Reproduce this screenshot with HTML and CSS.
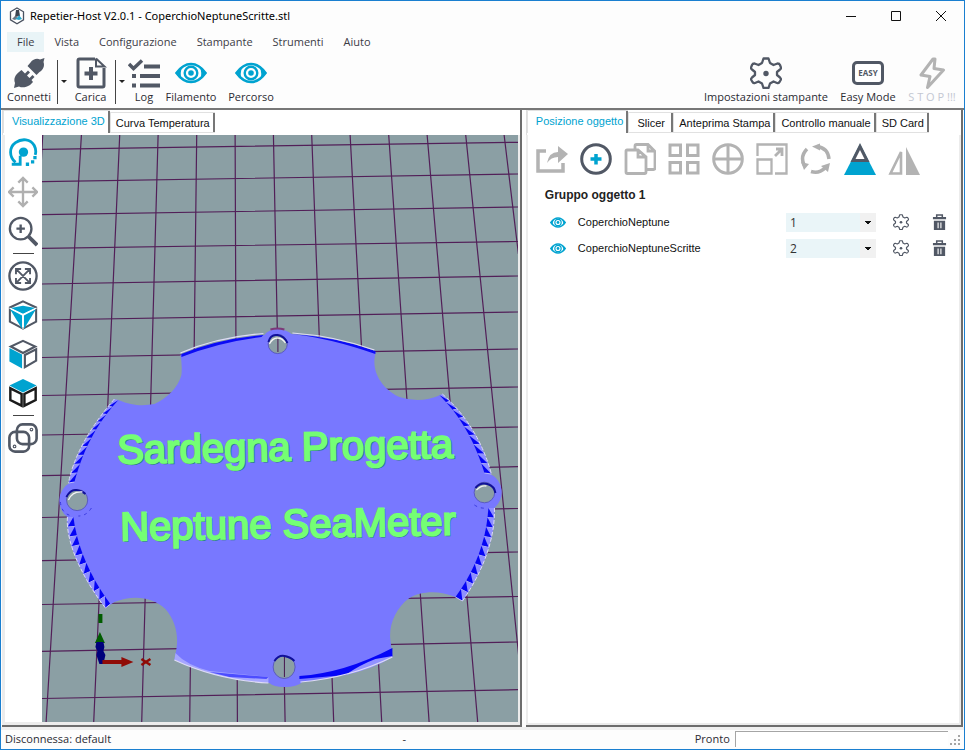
FILE: index.html
```html
<!DOCTYPE html>
<html lang="it">
<head>
<meta charset="utf-8">
<title>Repetier-Host V2.0.1 - CoperchioNeptuneScritte.stl</title>
<link rel="stylesheet" href="styles.css">
</head>
<body>
<svg class="defs" aria-hidden="true">
  <symbol id="eye" viewBox="0 0 32 22">
    <path d="M1.500 11Q8 2 16 2T30.500 11Q24 20 16 20T1.500 11Z" fill="none" stroke="currentColor" stroke-width="2.600"/>
    <circle cx="16" cy="11" r="6.300" fill="none" stroke="currentColor" stroke-width="2.400"/>
    <circle cx="16" cy="11" r="2.800" fill="currentColor"/>
    <path d="M6 5Q2 9 1 11Q3 15 7 18Q4 11 8 4ZM26 5Q30 9 31 11Q29 15 25 18Q28 11 24 4Z" fill="currentColor"/>
  </symbol>
  <symbol id="gear" viewBox="0 0 32 32">
    <path d="M13.500 1.500h5l1.500 4.500 3.500 2 4-1.500q2 0 2.500 1.500l1 2.500q0 1.500-1 2L27 15v3l3 2.500q1 1 1 2L29.500 25q-1 1.500-2.500 1l-3.500-1.500-3.500 2-1.500 4.500h-5L12 26.500l-3.500-2L5 26q-1.500.500-2.500-1L1 22.500q0-1 1-2L5 18v-3l-3-2.500q-1-.500-1-2L2 8q.500-1.500 2.500-1.500l4 1.500 3.500-2Z" fill="none" stroke="currentColor" stroke-width="2.300" stroke-linejoin="round"/>
    <circle cx="16" cy="16.500" r="2.700" fill="currentColor"/>
  </symbol>
  <symbol id="trash" viewBox="0 0 16 18">
    <path d="M5 3V1h6v2" fill="none" stroke="currentColor" stroke-width="1.600"/>
    <path d="M1 3h14v2.500H1ZM2 7h12v10H2Z" fill="currentColor"/>
    <path d="M6.500 9v6M9.500 9v6" stroke="#fff" stroke-width="1.200"/>
  </symbol>
</svg>

<div class="window">
  <header class="titlebar">
    <svg class="logo" viewBox="0 0 16 18"><path d="M8 1l6.500 3.800v8L8 16.700 1.500 12.800v-8Z" fill="#fff" stroke="#4a5260" stroke-width="1.300"/><path d="M7 3l3 0 1 6-5 1Z" fill="#3c4450"/><path d="M6 9L3 12l3 1 3-2Z" fill="#6b7480"/><path d="M10 8l3 4-3 1-4-1 3-2Z" fill="#28a6cc"/></svg>
    <h1 class="title">Repetier-Host V2.0.1 - CoperchioNeptuneScritte.stl</h1>
    <div class="caption">
      <button aria-label="Riduci"><svg viewBox="0 0 12 12"><path d="M1 6.500h10"/></svg></button>
      <button aria-label="Ingrandisci"><svg viewBox="0 0 12 12"><path d="M1.500 1.500h9v9h-9Z"/></svg></button>
      <button aria-label="Chiudi"><svg viewBox="0 0 12 12"><path d="M1 1l10 10M11 1L1 11"/></svg></button>
    </div>
  </header>

  <nav class="menu">
    <button class="open">File</button><button>Vista</button><button>Configurazione</button><button>Stampante</button><button>Strumenti</button><button>Aiuto</button>
  </nav>

  <div class="toolbar">
    <button class="tool connect">
      <svg viewBox="0 0 32 32" fill="#515865"><path d="M31.500 1l-1 4c1.500 4-.5 8-4 10l-3 3-9-9 3-3.500C20 2 24 1 27 2.500ZM1 31l1-5C.5 22 2 18 6 15l2.500-2L12 16.500l3-3 2 2-3 3 2.500 2.500 3-3 2 2-3 3L20 25l-3 3c-4 2.500-8 3-11 1.500Z"/></svg>
      <span>Connetti</span></button>
    <i class="rule"></i>
    <button class="drop" aria-label="Altre connessioni"></button>
    <button class="tool load">
      <svg viewBox="0 0 32 32" fill="none" stroke="#515865" stroke-width="3"><path d="M20 2H4.500Q3 2 3 3.500v25Q3 30 4.500 30h23q1.500 0 1.500-1.500V11"/><path d="M21 1.500v8h8.500L21 1.500" stroke-width="2"/><path d="M16 10v13M9.500 16.500h13" stroke-width="4"/></svg>
      <span>Carica</span></button>
    <i class="rule"></i>
    <button class="drop" aria-label="File recenti"></button>
    <button class="tool log">
      <svg viewBox="0 0 32 32" fill="none" stroke="#515865" stroke-width="4"><path d="M1 7l4.500 4.500L14 3.500" stroke-width="3.500"/><path d="M16 9.500h16M12 19h20M12 28.500h20"/><path d="M4 19h4M4 28.500h4"/></svg>
      <span>Log</span></button>
    <button class="tool wide"><svg class="blue" viewBox="0 0 32 32"><use href="#eye" y="5" width="32" height="22"/></svg><span>Filamento</span></button>
    <button class="tool wide"><svg class="blue" viewBox="0 0 32 32"><use href="#eye" y="5" width="32" height="22"/></svg><span>Percorso</span></button>
    <div class="spring"></div>
    <button class="tool printer"><svg class="slate" viewBox="0 0 32 32"><use href="#gear" width="32" height="32"/></svg><span>Impostazioni stampante</span></button>
    <button class="tool easy">
      <svg viewBox="0 0 32 32"><rect x="1.500" y="5.500" width="29" height="21" rx="3.500" fill="#fff" stroke="#515865" stroke-width="3"/><text x="16" y="19" class="easytext">EASY</text></svg>
      <span>Easy Mode</span></button>
    <button class="tool wide stop">
      <svg viewBox="0 0 32 32" fill="none" stroke="#b3b3b3" stroke-width="3" stroke-linejoin="round"><path d="M17 2L5 18l9 1.500L11.500 30.500 27.500 13l-9.500-1.500L19 2Z"/></svg>
      <span>S T O P !!!</span></button>
  </div>

  <main class="work">
    <section class="left">
      <div class="tabs"><button class="tab active">Visualizzazione 3D</button><button class="tab">Curva Temperatura</button></div>
      <div class="view">
        <div class="side">
          <button aria-label="Ruota"><svg viewBox="0 0 32 32"><circle cx="16.500" cy="15" r="5" fill="#00a3d0"/><path d="M8 26C1 20 1 10 8 5S24 1 28 8c2 4 2 7 1 10" fill="none" stroke="#00a3d0" stroke-width="3"/><path d="M4 28h9V19" fill="none" stroke="#00a3d0" stroke-width="3"/><path d="M19 28h3.500M24.500 25.500h3.500M27 21h3.500" stroke="#00a3d0" stroke-width="3.500"/></svg></button>
          <button aria-label="Sposta"><svg viewBox="0 0 32 32" fill="none" stroke="#b0b0b0" stroke-width="2.500"><path d="M16 1v30M1 16h30M11 6l5-5 5 5M11 26l5 5 5-5M6 11l-5 5 5 5M26 11l5 5-5 5"/></svg></button>
          <button aria-label="Zoom"><svg viewBox="0 0 32 32" fill="none" stroke="#515865" stroke-width="2.500"><circle cx="13.500" cy="13.500" r="11.500"/><path d="M13.500 9v9M9 13.500h9"/><path d="M22 22l9 9" stroke-width="4"/></svg></button>
          <hr>
          <button aria-label="Adatta"><svg viewBox="0 0 32 32" fill="none" stroke="#515865" stroke-width="2"><circle cx="16" cy="16" r="14.500" stroke-width="2.500"/><path d="M9 9l14 14M23 9L9 23M8.500 14V8.500H14M18 8.500h5.500V14M23.500 18v5.500H18M14 23.500H8.500V18"/></svg></button>
          <button aria-label="Vista isometrica"><svg viewBox="0 0 32 32"><path d="M16 1.500L30 8v15L16 30.500 2 23V8Z" fill="none" stroke="#515865" stroke-width="2.200"/><path d="M3 8.500L16 6l13 2.500-13 6.500ZM2 9.500L15 16.500V31ZM30 9.500L17 16.500V31Z" fill="#00a3d0"/><path d="M1.500 8.500L16 15.500l14.500-7M16 15.500V31" fill="none" stroke="#fff" stroke-width="1.200"/></svg></button>
          <button aria-label="Vista frontale"><svg viewBox="0 0 32 32" fill="none" stroke="#515865" stroke-width="2.300"><path d="M16 2l13 6-13 7L3 8ZM30 11v12l-12 7V17Z"/><path d="M1.500 9.500L15 16.500v15L1.500 24Z" fill="#00a3d0" stroke="none"/></svg></button>
          <button aria-label="Vista dall'alto"><svg viewBox="0 0 32 32" fill="none" stroke="#1b1b1b" stroke-width="2.600"><path d="M2.500 11v12.500l12 6V17ZM29.500 11v12.500l-12 6V17Z"/><path d="M16 1l14.500 7L16 15.500 1.500 8Z" fill="#00a3d0" stroke="none"/></svg></button>
          <hr>
          <button aria-label="Proiezione"><svg viewBox="0 0 32 32" fill="none" stroke="#515865" stroke-width="2.800"><rect x="9.500" y="1.500" width="21" height="21" rx="6"/><rect x="1.500" y="9.500" width="21" height="21" rx="6"/><circle cx="25" cy="7" r=".6"/><circle cx="7" cy="25" r=".6"/></svg></button>
        </div>
        <svg class="scene" viewBox="42 135 477 587" preserveAspectRatio="xMidYMid slice" role="img" aria-label="Anteprima 3D del coperchio">
          <g class="grid">
            <path d="M42 149.300L519 142.300M42 181.700L519 174M42 214.700L519 207M42 248.300L519 241.500M42 284L519 276M42 320L519 312M42 357.500L519 349M42 395.500L519 387M42 435L519 427M42 475.700L519 466.700M42 517.500L519 508.500M42 560.700L519 552M42 604.500L519 596.500M42 651.300L519 642M42 698.500L519 689.700"/>
            <path d="M43.300 135L42 160M82 135L46.700 722M120.300 135L94.300 722M158.700 135L142.300 722M197.300 135L190.300 722M235.700 135L238 722M274 135L285.700 722M312.300 135L334.300 722M350.700 135L382.300 722M389.300 135L429.700 722M427.700 135L478.300 722M466.300 135L526 722M504.700 135L519 254"/>
          </g>
          <path fill="#7878ff" d="M181 355Q221 338 265 335Q268 330 278 329Q288 330 292 334Q335 336 376 352L375 360C374 378 388 392 400 397Q421 404 441 395Q477 426 491 474A20.500 20.500 0 0 1 495 508C496 540 482 574 463 601L456 597C440 590 421 591 410 598C396 608 389 626 391 640L393 657Q350 677 303 682Q298 687 285 687Q274 687 270 683Q220 680 175 660L176 654C180 638 177 622 166 609C152 596 133 595 115 602L106 608C86 582 66 545 68 517A20.500 20.500 0 0 1 70 483Q77 444 115 400L119 400C133 406 144 406 155 404C167 399 179 387 182 375Q183 364 181 355Z"/>
          <g id="teeth"></g>
          <path d="M182 354Q218 339 264 335L262 337Q220 342 182 357ZM293 334Q336 337 376 351V354Q330 338 293 334Z" fill="#0b0bf5"/>
          <path d="M181 353Q218 337 264 333.500M293 333Q336 336 375 350" fill="none" stroke="#dedcf5" stroke-width="1.200"/>
          <path d="M393 648L393 657Q374 667 346 675L300 679V676Q345 673 393 648Z" fill="#0505f8"/>
          <path d="M393 656L376 659Q360 665 346 675Q374 669 393 657Z" fill="#9292ff"/>
          <path d="M176 653Q187 665 210 671L269 677V683Q218 680 175 660Z" fill="#a6a6ff"/>
          <path d="M210 672L269 677 267 679 230 677Z" fill="#4c4cff"/>
          <path d="M175 660Q218 680 269 683M301 682Q350 678 393 657" fill="none" stroke="#dedcf5" stroke-width="1.200"/>
          <path d="M271 329.500q7-2 14 0" fill="none" stroke="#7c3979" stroke-width="2"/>
          <g class="hole"><circle cx="278.300" cy="344" r="9.600"/><circle cx="77.700" cy="500" r="10.600"/><circle cx="485" cy="492.500" r="10.300"/><ellipse cx="284.700" cy="667" rx="11" ry="11.500"/></g>
          <path d="M278.500 337v15M285 657v20" stroke="#46154d" stroke-width="1"/>
          <path d="M269 342q2-8 9-7t10 8M67 497q4-8 10-7t9 4M476 488q5-6 12-4t8 9M275 661q4-6 10-5t10 5" fill="none" stroke="#10109a" stroke-width="2"/>
          <path d="M270 344q3-6 8-6t8 5M69 500q4-9 14-8M477 490q5-5 10-4" fill="none" stroke="#f2f2f2" stroke-width="1.300"/>
          <path d="M61 502q1 12 12 14M92 508q-5 8-13 8M475 505q6 4 13 3" fill="none" stroke="#3a3ae0" stroke-width="1" stroke-dasharray="3 4"/>
          <g class="model-text shade"><text transform="translate(119.500 464.500) rotate(-1)">Sardegna Progetta</text><text transform="translate(122 541.500) rotate(-1)">Neptune SeaMeter</text></g>
          <g class="model-text"><text transform="translate(118 463.500) rotate(-1)">Sardegna Progetta</text><text transform="translate(121 540.500) rotate(-1)">Neptune SeaMeter</text></g>
          <path d="M99 614h4v9h-4ZM95.500 643l5-11 5 11Z" fill="#005c00"/>
          <path d="M97 642h7l1 5-1 4 2 4-2 9h-4l-3-9 1-4-2-4Z" fill="#00007c"/>
          <path d="M103 660h19v-3l12 5-12 5v-3h-19Z" fill="#900b06"/>
          <path d="M142 659l9 6M151 659l-9 6" stroke="#900b06" stroke-width="2.500"/>
        </svg>
      </div>
    </section>

    <section class="right">
      <div class="tabs"><button class="tab active">Posizione oggetto</button><button class="tab">Slicer</button><button class="tab">Anteprima Stampa</button><button class="tab">Controllo manuale</button><button class="tab">SD Card</button></div>
      <div class="objects">
        <div class="actions">
          <button aria-label="Esporta"><svg viewBox="0 0 32 32"><path d="M10 8H2v20h25v-8" fill="none" stroke="#b3b3b3" stroke-width="3.500"/><path d="M11 20Q13 9 22 9V3l10 8-10 9v-6Q15 14 11 20Z" fill="#b3b3b3"/></svg></button>
          <button aria-label="Aggiungi"><svg viewBox="0 0 32 32" fill="none"><circle cx="16" cy="16" r="14.300" stroke="#515865" stroke-width="3"/><path d="M16 11v10.500M10.500 16h11" stroke="#00a3d0" stroke-width="3.500"/></svg></button>
          <button aria-label="Copia"><svg viewBox="0 0 32 32" fill="none" stroke="#b3b3b3" stroke-width="2.800"><path d="M14 7H3Q2 7 2 8v21q0 1.500 1.500 1.500h17q1.500 0 1.500-1.500V14ZM14 7v7h7M11 7V3q0-1.500 1.500-1.500H24l7 7V25q0 1.500-1.500 1.500H23M24 2v6h6"/></svg></button>
          <button aria-label="Disponi"><svg viewBox="0 0 32 32" fill="none" stroke="#b3b3b3" stroke-width="3"><path d="M2 2h10.500v10.500H2ZM19.500 2H30v10.500H19.500ZM2 19.500h10.500V30H2ZM19.500 19.500H30V30H19.500Z"/></svg></button>
          <button aria-label="Centra"><svg viewBox="0 0 32 32" fill="none" stroke="#b3b3b3" stroke-width="3"><circle cx="16" cy="16" r="14.300"/><path d="M16 2v28M2 16h28"/></svg></button>
          <button aria-label="Scala"><svg viewBox="0 0 32 32" fill="none" stroke="#b3b3b3" stroke-width="2.300"><path d="M1.500 13V1.500h29v29H19M1.500 16.500h14v14h-14Z"/><path d="M19 13l6-6M20 6h6v7" stroke-width="2.800"/></svg></button>
          <button aria-label="Ruota oggetto"><svg viewBox="0 0 32 32" fill="none" stroke="#b0b0b0" stroke-width="3.500"><path d="M17 3.500Q28 5 29 16M25 25q-6 6-14 3.500M4 22Q0 13 7 6"/><path d="M12 3.500l8-3v7ZM30 20l-9 3 7 6ZM1 19l8 2-5 6Z" fill="#b0b0b0" stroke="none"/></svg></button>
          <button aria-label="Taglia"><svg viewBox="0 0 32 32"><path d="M16 1l16 31H0Z" fill="#00a3d0"/><path d="M16 0l9.500 19h-19Z" fill="#515865"/><path d="M16 7l4.500 9h-9Z" fill="#fff"/></svg></button>
          <button aria-label="Specchia"><svg viewBox="0 0 32 32"><path d="M18 4l14 28H18Z" fill="#b3b3b3"/><path d="M13 9v21.500H2.500Z" fill="none" stroke="#b3b3b3" stroke-width="2.600"/></svg></button>
        </div>
        <h2 class="group">Gruppo oggetto 1</h2>
        <ul class="list">
          <li>
            <button class="vis" aria-label="Visibile"><svg viewBox="0 0 32 22"><use href="#eye"/></svg></button>
            <label for="ex1">CoperchioNeptune</label>
            <select id="ex1"><option>1</option><option>2</option></select>
            <button class="cfg" aria-label="Impostazioni"><svg viewBox="0 0 32 32"><use href="#gear"/></svg></button>
            <button class="del" aria-label="Elimina"><svg viewBox="0 0 16 18"><use href="#trash"/></svg></button>
          </li>
          <li>
            <button class="vis" aria-label="Visibile"><svg viewBox="0 0 32 22"><use href="#eye"/></svg></button>
            <label for="ex2">CoperchioNeptuneScritte</label>
            <select id="ex2"><option>1</option><option selected>2</option></select>
            <button class="cfg" aria-label="Impostazioni"><svg viewBox="0 0 32 32"><use href="#gear"/></svg></button>
            <button class="del" aria-label="Elimina"><svg viewBox="0 0 16 18"><use href="#trash"/></svg></button>
          </li>
        </ul>
      </div>
    </section>
  </main>

  <footer class="status">
    <span class="conn">Disconnessa: default</span><span class="temp">-</span><span class="ready">Pronto</span>
    <div class="progress" role="progressbar" aria-label="Avanzamento"></div>
    <svg class="grip" viewBox="0 0 12 12" fill="#a5a5a5"><path d="M9 1h2v2H9ZM5 5h2v2H5ZM9 5h2v2H9ZM1 9h2v2H1ZM5 9h2v2H5ZM9 9h2v2H9Z"/></svg>
  </footer>
</div>
<script src="scene.js"></script>
</body>
</html>
```
FILE: styles.css
```css
* { box-sizing: border-box; }
body { margin: 0; font: 12px/16px "Open Sans", "Noto Sans", sans-serif; color: #2b2b33; background: #fff; }
button { font: inherit; color: inherit; background: none; border: 0; padding: 0; margin: 0; }
svg { display: block; }
.defs { position: absolute; width: 0; height: 0; }
.blue { color: #00a3d0; }
.slate { color: #515865; }

.window { display: flex; flex-direction: column; height: 100vh; min-height: 480px; border: 1px solid #1a7fd0; background: #fdfdfd; }

.titlebar { display: flex; align-items: center; height: 29px; flex: none; padding-left: 8px; }
.logo { width: 16px; height: 18px; }
.title { margin: 0 0 0 5px; font: 400 11px/16px "Noto Sans", sans-serif; color: #000; }
.caption { display: flex; margin-left: auto; padding-right: 1px; }
.caption button { width: 45px; height: 28px; display: grid; place-items: center; }
.caption svg { width: 12px; height: 12px; fill: none; stroke: #111; stroke-width: 1; }

.menu { display: flex; flex: none; height: 24px; padding: 2px 0 2px 6px; font-size: 11px; color: #3c3c46; }
.menu button { padding: 0 10px; }
.menu .open { background: #e9f4f7; }

.toolbar { display: flex; flex: none; height: 54px; padding: 3px 2px 2px 3px; font-size: 11px; }
.tool { display: flex; flex-direction: column; align-items: center; white-space: nowrap; }
.tool svg { width: 32px; height: 32px; }
.tool span { line-height: 16px; }
.connect { width: 50px; }
.load { width: 43px; }
.log { width: 34px; }
.wide { width: 60px; }
.printer { width: 136px; }
.easy { width: 68px; }
.spring { flex: 1; }
.rule { width: 1px; margin: 3px 1px 2px 3px; background: #444; }
.drop { width: 10px; display: grid; place-items: center; }
.drop::after { content: ""; border: 3px solid transparent; border-top-color: #222; border-bottom: 0; }
.stop { color: #c3c7d2; }
.easytext { font: 700 8px "Open Sans", sans-serif; fill: #515865; text-anchor: middle; }

.work { display: flex; flex: 1; min-height: 0; gap: 4px; border-top: 2px solid #777; padding: 0 1px 0 1px; font-family: "Liberation Sans", sans-serif; font-size: 12px; }
.left { flex: 520 1 0; }
.right { flex: 437 1 0; }
.left, .right { display: flex; flex-direction: column; min-width: 0; border: solid #6d6d6d; border-width: 0 2px 2px 0; background: #fff; }
.tabs { display: flex; align-items: flex-end; flex: none; height: 25px; padding-bottom: 2px; border-left: 1px solid #ddd; white-space: nowrap; }
.tab { height: 21px; min-width: 45px; padding: 0 5px; font-size: 11px; color: #111; border: solid #e1e1e1; border-width: 1px 0 1px 1px; box-shadow: inset -2px 0 #777; }
.tab.active { height: 23px; padding: 0 5px 2px 8px; color: #00a3d0; border-bottom: 0; }

.view { display: flex; flex: 1; min-height: 0; border: solid #ececec; border-width: 0 2px 3px 3px; }
.side { display: flex; flex-direction: column; align-items: center; width: 37px; flex: none; gap: 7px; padding: 2px 1px 0 0; background: #fff; }
.side button { flex: none; }
.side svg { width: 30px; height: 32px; }
.side hr { width: 21px; height: 1px; margin: -1px 0; border: 0; background: #444; flex: none; }
.scene { flex: 1; min-width: 0; height: 100%; background: #8b9fa4; }
.grid path { fill: none; stroke: #521f58; stroke-width: 1.2; }
.hole { fill: #8b9fa4; stroke: #5a5ac0; stroke-width: 1; }
.model-text { font: 40px "Liberation Sans", Arial, sans-serif; fill: #74ff74; stroke: #74ff74; stroke-width: 2; }
.model-text.shade { fill: #2f7f80; stroke: #2f7f80; stroke-width: 1; }

.objects { flex: 1; min-height: 0; border: solid #ececec; border-width: 0 2px 2px 2px; padding: 6px 8px 0 7px; }
.actions { display: flex; gap: 12px; padding: 2px 0 0 1px; }
.actions svg { width: 32px; height: 32px; }
.group { margin: 12px 0 0 10px; font: 700 12px/16px "Liberation Sans", sans-serif; color: #222; }
.list { list-style: none; margin: 6px 0 0; padding: 0 0 0 15px; }
.list li { display: grid; grid-template-columns: 28px 1fr 90px 33px 38px; align-items: center; height: 26px; padding-right: 4px; font-size: 11px; color: #111; }
.vis svg { width: 16px; height: 11px; color: #00a3d0; }
.list select { appearance: none; height: 19px; width: 90px; padding: 0 4px; border: 0; border-radius: 0; font: 12px "Open Sans", sans-serif; color: #333; background: conic-gradient(from -45deg at 50% 100%, #111 90deg, transparent 0) right 5px center / 6px 3px no-repeat, linear-gradient(90deg, #eaf5f8 74px, #f1f1f1 74px); }
.cfg, .del { justify-self: end; color: #515865; }
.cfg svg { width: 16px; height: 16px; }
.del svg { width: 15px; height: 17px; }

.status { display: flex; align-items: center; flex: none; height: 22px; padding: 2px 3px 3px 4px; font-size: 11px; border-top: 3px solid #f0f0f0; }
.conn { flex: 397 1 0; }
.temp { flex: 292 1 0; }
.progress { flex: 212 1 0; height: 16px; margin-left: 5px; border: solid #a5a5a5; border-width: 1px 0 0 1px; background: #fff; }
.grip { width: 12px; height: 12px; margin-left: 1px; align-self: flex-end; }
```
FILE: scene.js
```js
// Serrated rims: each has an outer edge, an inner edge and a tooth count.
const NS = "http://www.w3.org/2000/svg";
const rims = [
  ["M115 399Q77 443 69 483", "M119 400Q88 433 75 482", 10],
  ["M68 517C66 545 86 582 106 608", "M74 517Q80 562 111 604", 10],
  ["M443 394Q479 426 492 474", "M440 395Q471 426 485 473", 9],
  ["M495 508C496 540 482 574 463 601", "M489 508Q486 556 456 597", 10]
];
const group = document.getElementById("teeth");
function path(d) {
  const p = document.createElementNS(NS, "path");
  p.setAttribute("d", d);
  return p;
}
function add(d, attrs) {
  const p = path(d);
  for (const key in attrs) p.setAttribute(key, attrs[key]);
  group.appendChild(p);
}
function sample(p, t) {
  const q = p.getPointAtLength(p.getTotalLength() * t);
  return q.x.toFixed(1) + " " + q.y.toFixed(1);
}
for (const [outer, inner, count] of rims) {
  const o = path(outer), n = path(inner);
  for (let i = 0; i < count; i++) {
    const a = i / count, b = (i + 1) / count;
    add(`M${sample(o, a)}L${sample(o, b)} ${sample(n, b)} ${sample(n, a)}Z`, { fill: "#8f8fff" });
    add(`M${sample(n, a)}L${sample(n, b)} ${sample(o, b)}Z`, { fill: "#0505f5" });
    add(`M${sample(o, b)}L${sample(n, b)}`, { stroke: "#dedcf5", "stroke-width": 0.8 });
  }
  add(outer, { fill: "none", stroke: "#dedcf5", "stroke-width": 1, "stroke-dasharray": "4 2" });
}
```
